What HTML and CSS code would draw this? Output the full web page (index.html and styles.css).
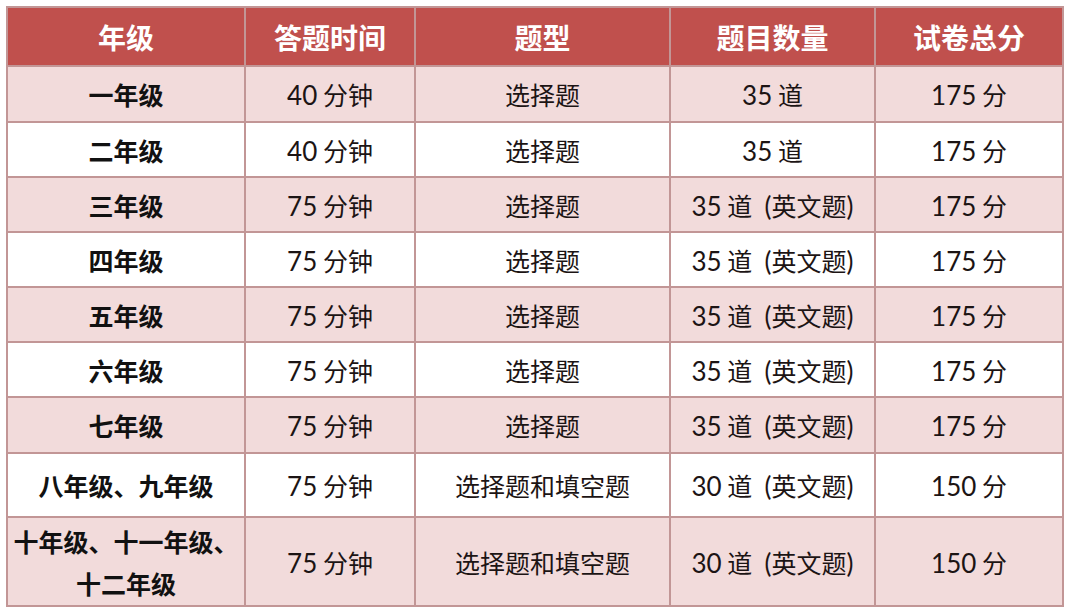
FILE: index.html
```html
<!DOCTYPE html>
<html lang="zh">
<head>
<meta charset="utf-8">
<link rel="stylesheet" href="styles.css">
</head>
<body>
<table class="grid">
  <colgroup>
    <col class="c1"><col class="c2"><col class="c3"><col class="c4"><col class="c5">
  </colgroup>
  <thead>
    <tr class="head"><th>年级</th><th>答题时间</th><th>题型</th><th>题目数量</th><th>试卷总分</th></tr>
  </thead>
  <tbody>
    <tr class="odd r56"><td class="g">一年级</td><td><span class="n">40</span> 分钟</td><td>选择题</td><td><span class="n">35</span> 道</td><td><span class="n">175</span> 分</td></tr>
    <tr class="even r55"><td class="g">二年级</td><td><span class="n">40</span> 分钟</td><td>选择题</td><td><span class="n">35</span> 道</td><td><span class="n">175</span> 分</td></tr>
    <tr class="odd r55"><td class="g">三年级</td><td><span class="n">75</span> 分钟</td><td>选择题</td><td><span class="n">35</span> 道 <span class="n">&nbsp;(</span>英文题<span class="n">)</span></td><td><span class="n">175</span> 分</td></tr>
    <tr class="even r55"><td class="g">四年级</td><td><span class="n">75</span> 分钟</td><td>选择题</td><td><span class="n">35</span> 道 <span class="n">&nbsp;(</span>英文题<span class="n">)</span></td><td><span class="n">175</span> 分</td></tr>
    <tr class="odd r55"><td class="g">五年级</td><td><span class="n">75</span> 分钟</td><td>选择题</td><td><span class="n">35</span> 道 <span class="n">&nbsp;(</span>英文题<span class="n">)</span></td><td><span class="n">175</span> 分</td></tr>
    <tr class="even r55"><td class="g">六年级</td><td><span class="n">75</span> 分钟</td><td>选择题</td><td><span class="n">35</span> 道 <span class="n">&nbsp;(</span>英文题<span class="n">)</span></td><td><span class="n">175</span> 分</td></tr>
    <tr class="odd r56"><td class="g">七年级</td><td><span class="n">75</span> 分钟</td><td>选择题</td><td><span class="n">35</span> 道 <span class="n">&nbsp;(</span>英文题<span class="n">)</span></td><td><span class="n">175</span> 分</td></tr>
    <tr class="even r64"><td class="g">八年级、九年级</td><td><span class="n">75</span> 分钟</td><td>选择题和填空题</td><td><span class="n">30</span> 道 <span class="n">&nbsp;(</span>英文题<span class="n">)</span></td><td><span class="n">150</span> 分</td></tr>
    <tr class="odd r89"><td class="g multi">十年级、十一年级、<br>十二年级</td><td><span class="n">75</span> 分钟</td><td>选择题和填空题</td><td><span class="n">30</span> 道 <span class="n">&nbsp;(</span>英文题<span class="n">)</span></td><td><span class="n">150</span> 分</td></tr>
  </tbody>
</table>
</body>
</html>
```

FILE: styles.css
```css
html, body {
  margin: 0;
  padding: 0;
  background: #ffffff;
}
body {
  padding: 6px 0 0 6px;
  font-family: "Noto Sans CJK SC", sans-serif;
}
.grid {
  border-collapse: collapse;
  table-layout: fixed;
  width: 1056px;
}
.c1 { width: 238px; }
.c2 { width: 170px; }
.c3 { width: 255px; }
.c4 { width: 205px; }
.c5 { width: 188px; }
.grid th, .grid td {
  border: 2px solid #c29696;
  text-align: center;
  vertical-align: middle;
  padding: 0;
  white-space: nowrap;
}
.head { height: 59px; background: #c0504d; }
.head th {
  color: #ffffff;
  font-family: "Noto Sans CJK SC", sans-serif;
  font-weight: 700;
  font-size: 28px;
  letter-spacing: 0;
}
.grid td {
  font-size: 25px;
  color: #1c1414;
}
.grid td .n {
  font-family: Lato, "Noto Sans CJK SC", sans-serif;
  font-size: 26px;
}
.odd { background: #f2dbdb; }
.even { background: #ffffff; }
.r55 { height: 55px; }
.r56 { height: 56px; }
.r64 { height: 64px; }
.r89 { height: 89px; }
.grid td.g {
  font-weight: 700;
  color: #111111;
}
.grid td.multi {
  line-height: 42px;
}
```
